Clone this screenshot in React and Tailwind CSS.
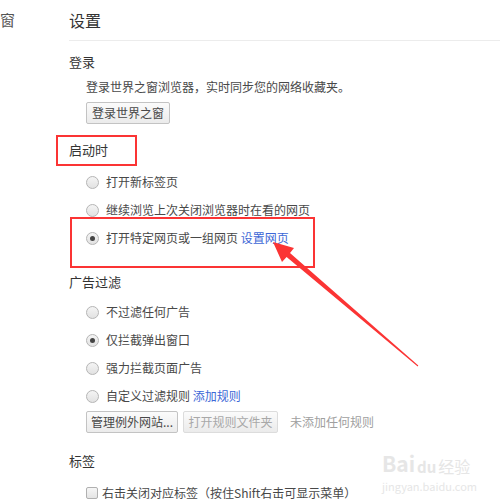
const FONT = { fontFamily: '"Noto Sans CJK SC", "Liberation Sans", sans-serif' };

const Radio = ({ checked, children }) => (
  <div className="flex items-center h-[28px]">
    <span className="w-[13px] h-[13px] rounded-full border border-[#b5b5b5] bg-gradient-to-b from-[#f4f4f4] to-[#e2e2e2] flex items-center justify-center shrink-0">
      {checked && <span className="w-[5px] h-[5px] rounded-full bg-[#444]" />}
    </span>
    <span className="ml-[7px] text-[12px] text-[#484848] leading-none">{children}</span>
  </div>
);

const Button = ({ children, disabled, className = "" }) => (
  <button
    className={`h-[22px] rounded-[2px] border text-[12px] leading-none bg-gradient-to-b from-[#fbfbfb] to-[#ebebeb] ${
      disabled ? "border-[#dcdcdc] text-[#a8a8a8]" : "border-[#c3c3c3] text-[#484848]"
    } ${className}`}
  >
    {children}
  </button>
);

const Heading = ({ children, className = "" }) => (
  <div className={`h-[20px] flex items-center text-[13px] text-[#333] ${className}`}>
    {children}
  </div>
);

export default function App() {
  return (
    <div className="relative w-[500px] h-[502px] bg-white overflow-hidden" style={FONT}>
      <div className="flex">
        <div className="w-[69px] shrink-0 h-[41px] flex items-center text-[15px] text-[#555]">
          窗
        </div>
        <div className="flex-1">
          <div className="h-[41px] flex items-center text-[16px] text-[#333] border-b border-[#ececec]">
            设置
          </div>

          <Heading className="mt-[11px]">登录</Heading>
          <div className="pl-[17px]">
            <div className="mt-[6px] h-[18px] flex items-center text-[12px] text-[#484848]">
              登录世界之窗浏览器，实时同步您的网络收藏夹。
            </div>
            <Button className="mt-[6px] w-[84px]">登录世界之窗</Button>
          </div>

          <Heading className="mt-[16px]">启动时</Heading>
          <div className="pl-[17px] mt-[8px]">
            <Radio>打开新标签页</Radio>
            <Radio>继续浏览上次关闭浏览器时在看的网页</Radio>
            <Radio checked>
              打开特定网页或一组网页 <span className="text-[#3d67d6]">设置网页</span>
            </Radio>
          </div>

          <Heading className="mt-[20px]">广告过滤</Heading>
          <div className="pl-[17px] mt-[6px]">
            <Radio>不过滤任何广告</Radio>
            <Radio checked>仅拦截弹出窗口</Radio>
            <Radio>强力拦截页面广告</Radio>
            <Radio>
              自定义过滤规则 <span className="text-[#3d67d6]">添加规则</span>
            </Radio>
            <div className="mt-[1px] flex items-center">
              <Button className="w-[92px]">管理例外网站...</Button>
              <Button disabled className="ml-[5px] w-[95px]">打开规则文件夹</Button>
              <span className="ml-[12px] text-[12px] text-[#a0a0a0]">未添加任何规则</span>
            </div>
          </div>

          <Heading className="mt-[18px]">标签</Heading>
          <div className="pl-[17px] mt-[12px] h-[20px] flex items-center">
            <span className="w-[12px] h-[12px] rounded-[2px] border border-[#b0b0b0] bg-gradient-to-b from-[#f6f6f6] to-[#e4e4e4] shrink-0" />
            <span className="ml-[4px] text-[12px] text-[#484848]">
              右击关闭对应标签（按住Shift右击可显示菜单）
            </span>
          </div>
        </div>
      </div>

      {/* annotation overlays */}
      <div className="absolute left-[56px] top-[135px] w-[81px] h-[31px] border-2 border-[#fb3434]" />
      <div className="absolute left-[70px] top-[217px] w-[245px] h-[51px] border-2 border-[#fb3434]" />
      <svg className="absolute left-0 top-0" width="500" height="502">
        <polygon
          points="273,242 294,248 290,253 418.3,365.6 417.7,366.4 286.6,257 282,262"
          fill="#fb3434"
        />
      </svg>

      {/* watermark */}
      <div className="absolute left-[382px] top-[450px] flex flex-col items-start text-[#e6e6e6]">
        <div className="h-[24px] flex items-end gap-[2px] leading-none">
          <span className="text-[21px] font-bold">Bai</span>
          <span className="text-[15px] font-bold">du</span>
          <span className="text-[16px]">经验</span>
        </div>
        <div className="mt-[7px] h-[12px] text-[11px] leading-none">jingyan.baidu.com</div>
      </div>
    </div>
  );
}
